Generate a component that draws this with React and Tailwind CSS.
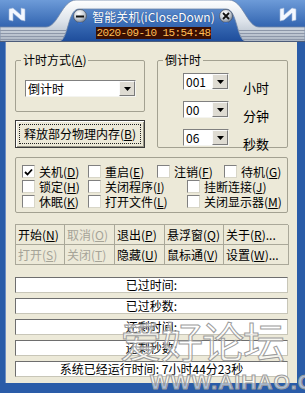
import React from 'react';

const FONT = { fontFamily: '"Noto Sans CJK SC", "Noto Sans", sans-serif' };

// letter in brackets is the accelerator key, underlined like the old Win32 dialogs
const K = ({ t, k, tail = '' }) => (
  <>
    {t}(<span className="underline underline-offset-[1px]">{k}</span>){tail}
  </>
);

const silverPath =
  'M0,27 L46,27 C58,27 62,0 76,0 L229,0 C243,0 247,27 259,27 L305,27 L305,42 L247,42 C236,42 238,9 226,9 L79,9 C67,9 69,42 58,42 L0,42 Z';

const TitleBar = () => (
  <div className="relative h-[42px] w-[305px]">
    <svg width="305" height="42" className="absolute inset-0">
      <defs>
        <linearGradient id="tb-blue" x1="0" y1="0" x2="0" y2="1">
          <stop offset="0" stopColor="#6d9bd8" />
          <stop offset="0.55" stopColor="#3a6cb6" />
          <stop offset="1" stopColor="#1d4c9a" />
        </linearGradient>
        <linearGradient id="tb-silver" x1="0" y1="0" x2="0" y2="1">
          <stop offset="0" stopColor="#ffffff" />
          <stop offset="0.5" stopColor="#dde3ea" />
          <stop offset="1" stopColor="#aab4c2" />
        </linearGradient>
        <radialGradient id="tb-ball" cx="0.4" cy="0.3" r="0.7">
          <stop offset="0" stopColor="#ffffff" />
          <stop offset="0.6" stopColor="#c8ced6" />
          <stop offset="1" stopColor="#7d8794" />
        </radialGradient>
        <clipPath id="tb-clip">
          <path d={silverPath} />
        </clipPath>
      </defs>
      <rect width="305" height="42" fill="url(#tb-blue)" />
      <path d={silverPath} fill="url(#tb-silver)" stroke="#6d84a6" strokeWidth="0.8" />
      <g clipPath="url(#tb-clip)" stroke="#8d97a9" strokeWidth="1.2">
        <line x1="0" y1="30.5" x2="305" y2="30.5" />
        <line x1="0" y1="33.5" x2="305" y2="33.5" />
        <line x1="0" y1="36.5" x2="305" y2="36.5" />
        <line x1="0" y1="39.5" x2="305" y2="39.5" />
      </g>
      <line x1="0" y1="41.5" x2="305" y2="41.5" stroke="#4d5d7a" />

      {/* side logos */}
      <path d="M9,9 L13,8 L21,15 L21,8 L25,9 L25,21 L21,20 L13,13 L13,21 L9,20 Z" fill="#f4f8ff" stroke="#9fb6d8" strokeWidth="0.6" />
      <path d="M296,9 L292,8 L284,15 L284,8 L280,9 L280,21 L284,20 L292,13 L292,21 L296,20 Z" fill="#f4f8ff" stroke="#9fb6d8" strokeWidth="0.6" />

      {/* minimise */}
      <circle cx="80" cy="16" r="6.5" fill="url(#tb-ball)" stroke="#4a5260" strokeWidth="0.7" />
      <rect x="76" y="15.5" width="8" height="2" fill="#111" />
      <rect x="78" y="22.5" width="4" height="1.2" fill="#2d6fe0" />
      {/* close */}
      <circle cx="226" cy="16" r="6.5" fill="url(#tb-ball)" stroke="#4a5260" strokeWidth="0.7" />
      <path d="M223,13 L229,19 M229,13 L223,19" stroke="#111" strokeWidth="1.8" />
      <rect x="224" y="22.5" width="4" height="1.2" fill="#2d6fe0" />
    </svg>

    <div className="relative flex flex-col items-center pl-[2px]">
      <div className="mt-[8px] h-[17px] text-[12px] leading-[17px] text-white [text-shadow:0_0_1px_#1b3d7a]">
        智能关机(iCloseDown)
      </div>
      <div
        className="mt-[2px] flex h-[12px] w-[115px] items-center justify-center bg-[#3c0f02] text-[11px] leading-[12px] tracking-[-0.6px] text-[#ffbe55]"
        style={{ fontFamily: '"Liberation Mono", monospace' }}
      >
        2020-09-10 15:54:48
      </div>
    </div>
  </div>
);

const Select = ({ width, value }) => (
  <div
    className="flex h-[17px] items-stretch border border-t-[#808080] border-l-[#808080] border-b-[#f4f4f0] border-r-[#f4f4f0] bg-white"
    style={{ width }}
  >
    <span className="flex-1 pl-[2px] text-[12px] leading-[15px]">{value}</span>
    <span className="flex w-[16px] items-center justify-center border border-t-[#fafafa] border-l-[#fafafa] border-b-[#7a7a7a] border-r-[#7a7a7a] bg-[#dedbd2]">
      <svg width="7" height="4">
        <path d="M0,0 L7,0 L3.5,4 Z" fill="#000" />
      </svg>
    </span>
  </div>
);

const Check = ({ checked, w, children }) => (
  <div className="flex h-[15px] items-center gap-[4px]" style={w ? { width: w } : undefined}>
    <span className="flex h-[13px] w-[13px] shrink-0 items-center justify-center border border-t-[#808080] border-l-[#808080] border-b-[#d8d6c8] border-r-[#d8d6c8] bg-white">
      {checked && (
        <svg width="9" height="8">
          <path d="M1,4 L3.5,6.5 L8,1.5" stroke="#000" strokeWidth="1.8" fill="none" />
        </svg>
      )}
    </span>
    <span className="whitespace-nowrap text-[12px] leading-[14px]">{children}</span>
  </div>
);

const cells = [
  { k: <K t="开始" k="N" /> },
  { k: <K t="取消" k="O" />, off: true },
  { k: <K t="退出" k="P" /> },
  { k: <K t="悬浮窗" k="Q" /> },
  { k: <K t="关于" k="R" tail="..." /> },
  { k: <K t="打开" k="S" />, off: true },
  { k: <K t="关闭" k="T" />, off: true },
  { k: <K t="隐藏" k="U" /> },
  { k: <K t="鼠标通" k="V" /> },
  { k: <K t="设置" k="W" tail="..." /> },
];

const status = ['已过时间:', '已过秒数:', '还剩时间:', '还剩秒数:', '系统已经运行时间: 7小时44分23秒'];

const App = () => {
  return (
    <div className="relative h-[393px] w-[305px] overflow-hidden bg-[#2a5ca8] text-black" style={FONT}>
      <TitleBar />

      <div className="ml-[5px] mr-[8px] h-[341px] border-l border-[#6f8fc4] bg-[#ece9d8] pl-[9px] pr-[9px] pt-[12px]">
        {/* top row */}
        <div className="flex gap-[12px]">
          <div className="flex w-[130px] flex-col">
            <fieldset className="h-[58px] rounded-[2px] border border-[#a3a191]">
              <legend className="ml-[5px] px-[2px] text-[12px] leading-[12px]">
                <K t="计时方式" k="A" />
              </legend>
              <div className="ml-[9px] mt-[14px]">
                <Select width={111} value="倒计时" />
              </div>
            </fieldset>
            <button className="relative mt-[8px] h-[28px] w-[130px] border border-[#3a3a3a] bg-[#ece9d8] text-[12px] shadow-[inset_1px_1px_0_#ffffff,inset_-1px_-1px_0_#9a9888]">
              <span className="absolute inset-[3px] border border-dotted border-[#222]" />
              <K t="释放部分物理内存" k="B" />
            </button>
          </div>

          <fieldset className="h-[94px] w-[131px] rounded-[2px] border border-[#a3a191]">
            <legend className="ml-[5px] px-[2px] text-[12px] leading-[12px]">倒计时</legend>
            <div className="flex flex-col gap-[7px] pl-[25px] pt-[7px]">
              {[
                ['001', '小时'],
                ['00', '分钟'],
                ['06', '秒数'],
              ].map(([v, l]) => (
                <div key={l} className="flex items-start gap-[14px]">
                  <Select width={46} value={v} />
                  <span className="mt-[9px] text-[13px] leading-[12px]">{l}</span>
                </div>
              ))}
            </div>
          </fieldset>
        </div>

        {/* options */}
        <div className="mt-[9px] flex h-[56px] flex-col rounded-[2px] border border-[#a3a191] pl-[6px] pt-[6px]">
          <div className="flex">
            <Check checked w={66}>
              <K t="关机" k="D" />
            </Check>
            <Check w={69}>
              <K t="重启" k="E" />
            </Check>
            <Check w={67}>
              <K t="注销" k="F" />
            </Check>
            <Check>
              <K t="待机" k="G" />
            </Check>
          </div>
          <div className="flex">
            <Check w={66}>
              <K t="锁定" k="H" />
            </Check>
            <Check w={99}>
              <K t="关闭程序" k="I" />
            </Check>
            <Check>
              <K t="挂断连接" k="J" />
            </Check>
          </div>
          <div className="flex">
            <Check w={66}>
              <K t="休眠" k="K" />
            </Check>
            <Check w={99}>
              <K t="打开文件" k="L" />
            </Check>
            <Check>
              <K t="关闭显示器" k="M" />
            </Check>
          </div>
        </div>

        {/* command buttons */}
        <div className="mt-[11px] grid grid-cols-[49px_50px_50px_59px_65px] border-l border-t border-[#aaa899]">
          {cells.map((c, i) => (
            <div
              key={i}
              className={`flex h-[20px] items-center whitespace-nowrap border-b border-r border-[#aaa899] pl-[2px] text-[12px] ${
                c.off ? 'text-[#a6a498]' : 'text-black'
              }`}
            >
              {c.k}
            </div>
          ))}
        </div>

        {/* status lines */}
        <div className="mt-[12px] flex flex-col gap-[5px]">
          {status.map((s) => (
            <div
              key={s}
              className="flex h-[16px] items-center justify-center border border-t-[#6e6e6e] border-l-[#6e6e6e] border-b-[#c8c6b8] border-r-[#c8c6b8] bg-white text-[12px] leading-[14px]"
            >
              {s}
            </div>
          ))}
        </div>
      </div>

      {/* forum watermark */}
      <div className="pointer-events-none absolute left-[120px] top-[318px] whitespace-nowrap text-[42px] leading-[44px] tracking-[-1px] text-white/60 [-webkit-text-stroke:1px_#9c9c9c]">
        爱好论坛
      </div>
      <div
        className="pointer-events-none absolute left-[150px] top-[371px] whitespace-nowrap text-[21px] font-bold leading-[22px] tracking-[1px] text-white/60 [-webkit-text-stroke:1px_#9c9c9c]"
        style={{ fontFamily: '"Liberation Sans", sans-serif' }}
      >
        WWW.AIHAO.CC
      </div>
    </div>
  );
};

export default App;
